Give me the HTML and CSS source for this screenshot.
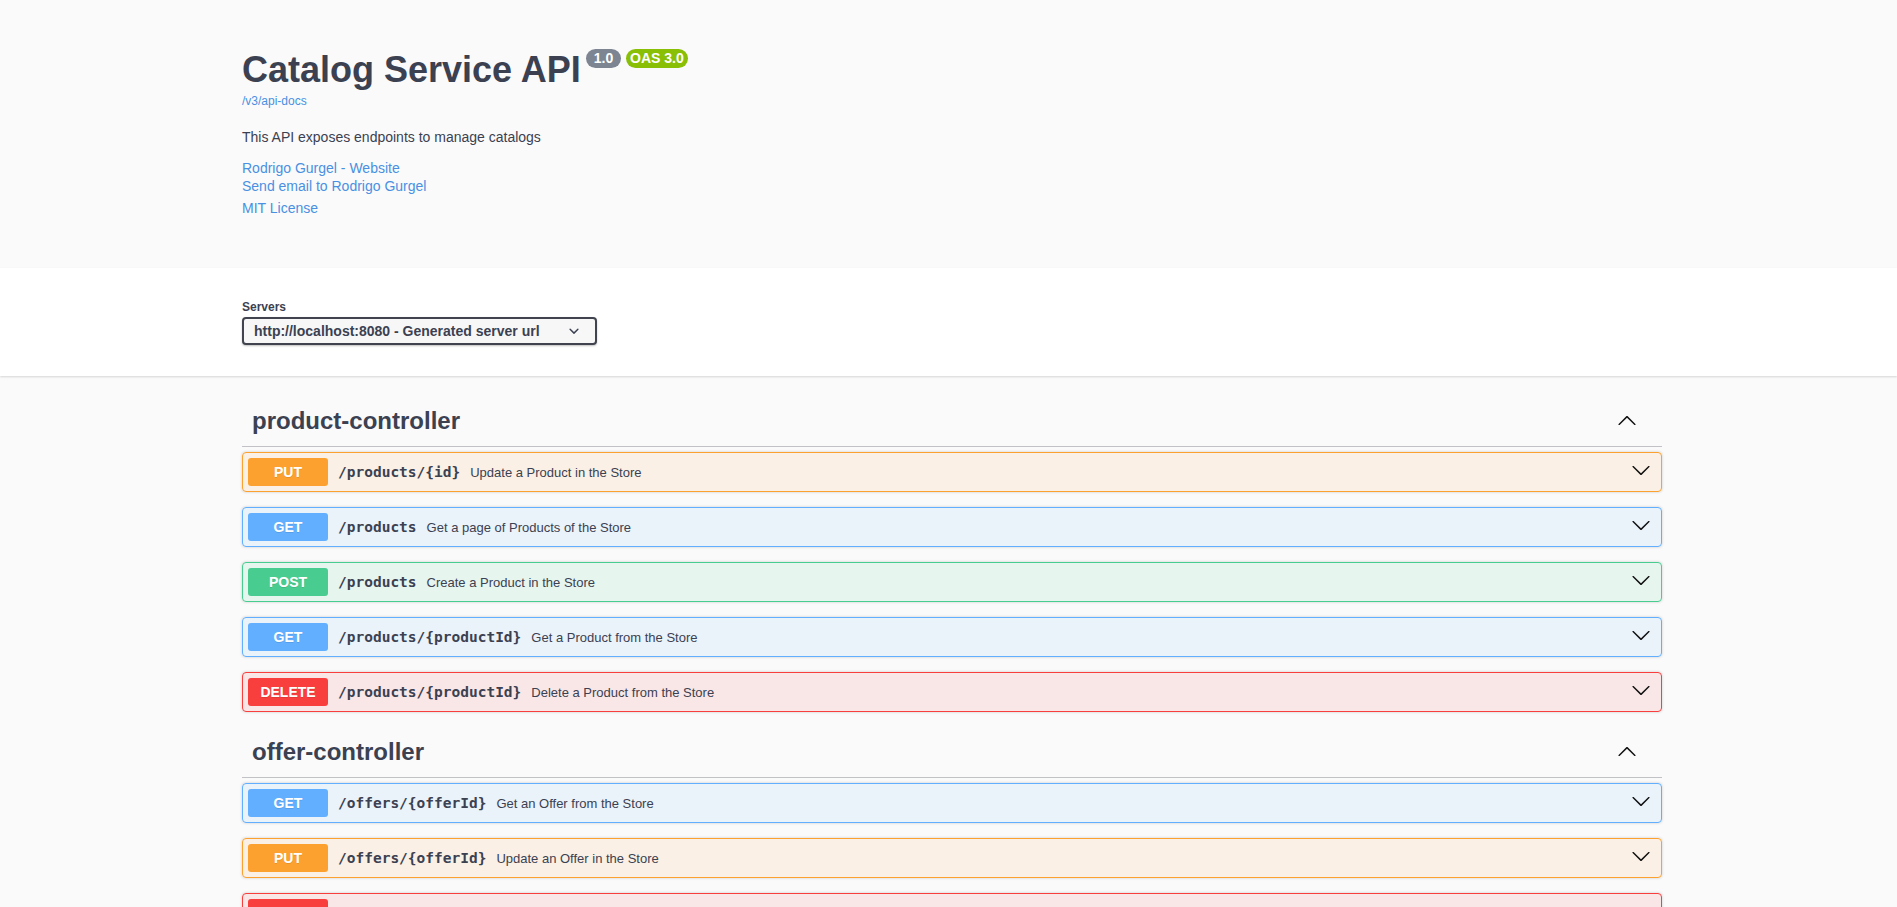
FILE: index.html
```html
<!DOCTYPE html>
<html lang="en">
<head>
<meta charset="utf-8">
<title>Catalog Service API</title>
<link rel="stylesheet" href="styles.css">
</head>
<body>
<section class="info-section">
  <div class="wrapper">
    <div class="info">
      <h2 class="title">Catalog Service API<span class="badge version"> 1.0 </span><span class="badge stamp">OAS 3.0</span></h2>
      <a class="base-url" href="#">/v3/api-docs</a>
      <p class="description">This API exposes endpoints to manage catalogs</p>
      <div class="contact">
        <a class="link" href="#">Rodrigo Gurgel - Website</a>
        <a class="link" href="#">Send email to Rodrigo Gurgel</a>
      </div>
      <div class="license"><a class="link" href="#">MIT License</a></div>
    </div>
  </div>
</section>

<section class="scheme-container">
  <div class="wrapper">
    <div class="servers">
      <span class="servers-title">Servers</span>
      <div class="select">
        <span class="select-text">http://localhost:8080 - Generated server url</span>
        <svg class="select-arrow" width="20" height="20" viewBox="0 0 20 20"><path d="M13.418 7.859a.695.695 0 01.978 0 .68.68 0 010 .969l-3.908 3.83a.697.697 0 01-.979 0l-3.908-3.83a.68.68 0 010-.969.695.695 0 01.978 0L10 11l3.418-3.141z"/></svg>
      </div>
    </div>
  </div>
</section>

<main class="wrapper ops">
  <section class="tag-section">
    <h3 class="tag">
      <span class="tag-name">product-controller</span>
      <svg class="tag-arrow" width="20" height="20" viewBox="0 0 20 20"><path d="M17.418 14.908c.272.268.709.268.979 0 .27-.268.271-.701 0-.969l-7.908-7.83c-.27-.268-.707-.268-.979 0l-7.908 7.83c-.27.268-.27.701 0 .969.271.268.709.268.979 0L10 7.767l7.418 7.141z"/></svg>
    </h3>
    <div class="opblock put">
      <div class="summary"><span class="method">PUT</span><span class="path">/products/{id}</span><span class="desc">Update a Product in the Store</span>
        <svg class="op-arrow" width="20" height="20" viewBox="0 0 20 20"><path d="M17.418 6.109c.272-.268.709-.268.979 0s.271.701 0 .969l-7.908 7.83c-.27.268-.707.268-.979 0l-7.908-7.83c-.27-.268-.27-.701 0-.969.271-.268.709-.268.979 0L10 13.25l7.418-7.141z"/></svg></div>
    </div>
    <div class="opblock get">
      <div class="summary"><span class="method">GET</span><span class="path">/products</span><span class="desc">Get a page of Products of the Store</span>
        <svg class="op-arrow" width="20" height="20" viewBox="0 0 20 20"><path d="M17.418 6.109c.272-.268.709-.268.979 0s.271.701 0 .969l-7.908 7.83c-.27.268-.707.268-.979 0l-7.908-7.830c-.27-.268-.27-.701 0-.969.271-.268.709-.268.979 0L10 13.25l7.418-7.141z"/></svg></div>
    </div>
    <div class="opblock post">
      <div class="summary"><span class="method">POST</span><span class="path">/products</span><span class="desc">Create a Product in the Store</span>
        <svg class="op-arrow" width="20" height="20" viewBox="0 0 20 20"><path d="M17.418 6.109c.272-.268.709-.268.979 0s.271.701 0 .969l-7.908 7.83c-.27.268-.707.268-.979 0l-7.908-7.83c-.27-.268-.27-.701 0-.969.271-.268.709-.268.979 0L10 13.25l7.418-7.141z"/></svg></div>
    </div>
    <div class="opblock get">
      <div class="summary"><span class="method">GET</span><span class="path">/products/{productId}</span><span class="desc">Get a Product from the Store</span>
        <svg class="op-arrow" width="20" height="20" viewBox="0 0 20 20"><path d="M17.418 6.109c.272-.268.709-.268.979 0s.271.701 0 .969l-7.908 7.83c-.27.268-.707.268-.979 0l-7.908-7.83c-.27-.268-.27-.701 0-.969.271-.268.709-.268.979 0L10 13.25l7.418-7.141z"/></svg></div>
    </div>
    <div class="opblock delete">
      <div class="summary"><span class="method">DELETE</span><span class="path">/products/{productId}</span><span class="desc">Delete a Product from the Store</span>
        <svg class="op-arrow" width="20" height="20" viewBox="0 0 20 20"><path d="M17.418 6.109c.272-.268.709-.268.979 0s.271.701 0 .969l-7.908 7.83c-.27.268-.707.268-.979 0l-7.908-7.83c-.27-.268-.27-.701 0-.969.271-.268.709-.268.979 0L10 13.25l7.418-7.141z"/></svg></div>
    </div>
  </section>

  <section class="tag-section">
    <h3 class="tag">
      <span class="tag-name">offer-controller</span>
      <svg class="tag-arrow" width="20" height="20" viewBox="0 0 20 20"><path d="M17.418 14.908c.272.268.709.268.979 0 .27-.268.271-.701 0-.969l-7.908-7.83c-.27-.268-.707-.268-.979 0l-7.908 7.83c-.27.268-.27.701 0 .969.271.268.709.268.979 0L10 7.767l7.418 7.141z"/></svg>
    </h3>
    <div class="opblock get">
      <div class="summary"><span class="method">GET</span><span class="path">/offers/{offerId}</span><span class="desc">Get an Offer from the Store</span>
        <svg class="op-arrow" width="20" height="20" viewBox="0 0 20 20"><path d="M17.418 6.109c.272-.268.709-.268.979 0s.271.701 0 .969l-7.908 7.83c-.27.268-.707.268-.979 0l-7.908-7.83c-.27-.268-.27-.701 0-.969.271-.268.709-.268.979 0L10 13.25l7.418-7.141z"/></svg></div>
    </div>
    <div class="opblock put">
      <div class="summary"><span class="method">PUT</span><span class="path">/offers/{offerId}</span><span class="desc">Update an Offer in the Store</span>
        <svg class="op-arrow" width="20" height="20" viewBox="0 0 20 20"><path d="M17.418 6.109c.272-.268.709-.268.979 0s.271.701 0 .969l-7.908 7.83c-.27.268-.707.268-.979 0l-7.908-7.83c-.27-.268-.27-.701 0-.969.271-.268.709-.268.979 0L10 13.25l7.418-7.141z"/></svg></div>
    </div>
    <div class="opblock delete">
      <div class="summary"><span class="method">DELETE</span><span class="path">/offers/{offerId}</span><span class="desc">Delete an Offer from the Store</span>
        <svg class="op-arrow" width="20" height="20" viewBox="0 0 20 20"><path d="M17.418 6.109c.272-.268.709-.268.979 0s.271.701 0 .969l-7.908 7.83c-.27.268-.707.268-.979 0l-7.908-7.83c-.27-.268-.27-.701 0-.969.271-.268.709-.268.979 0L10 13.25l7.418-7.141z"/></svg></div>
    </div>
  </section>
</main>
</body>
</html>
```

FILE: styles.css
```css
html, body {
  margin: 0;
  padding: 0;
}
body {
  background: #fafafa;
  color: #3b4151;
  font-family: "Liberation Sans", Arial, sans-serif;
}
.wrapper {
  width: 1420px;
  margin-left: 242px;
  box-sizing: border-box;
}

/* ---------- info ---------- */
.info-section {
  padding: 50px 0 51px;
}
.info {
  display: flex;
  flex-direction: column;
  align-items: flex-start;
}
.title {
  display: flex;
  align-items: flex-start;
  margin: 0;
  font-size: 36px;
  line-height: 40px;
  font-weight: 700;
  color: #3b4151;
}
.badge {
  margin: -1px 0 0 5px;
  padding: 2px 4px;
  border-radius: 57px;
  font-size: 14px;
  line-height: 15px;
  font-weight: 700;
  color: #fff;
  white-space: pre;
}
.badge.version { background: #7d8492; }
.badge.stamp { background: #89bf04; margin-left: 5px; }

.base-url {
  margin-top: 3px;
  font-size: 12px;
  line-height: 16px;
  color: #4990e2;
  text-decoration: none;
}
.description {
  margin: 19px 0 0;
  font-size: 14px;
  line-height: 18px;
}
.contact {
  margin-top: 13px;
  display: flex;
  flex-direction: column;
  align-items: flex-start;
}
.license {
  margin-top: 4px;
}
.link {
  font-size: 14px;
  line-height: 18px;
  color: #4990e2;
  text-decoration: none;
}

/* ---------- servers ---------- */
.scheme-container {
  background: #fff;
  box-shadow: 0 1px 2px 0 rgba(0, 0, 0, .15);
  padding: 32px 0 31px;
  margin-bottom: 20px;
}
.servers {
  display: flex;
  flex-direction: column;
  align-items: flex-start;
}
.servers-title {
  font-size: 12px;
  line-height: 14px;
  font-weight: 700;
}
.select {
  margin-top: 3px;
  width: 355px;
  height: 28px;
  box-sizing: border-box;
  display: flex;
  align-items: center;
  padding: 0 11px 0 10px;
  border: 2px solid #41444e;
  border-radius: 4px;
  background: #f7f7f7;
  box-shadow: 0 1px 2px 0 rgba(0, 0, 0, .25);
  font-size: 14px;
  line-height: 16px;
  font-weight: 700;
  color: #3b4151;
}
.select-text {
  flex: 1 1 auto;
}
.select-arrow {
  flex: none;
  fill: #3b4151;
}

/* ---------- operations ---------- */
.tag {
  display: flex;
  align-items: center;
  margin: 0 0 5px;
  padding: 10px 20px 10px 10px;
  border-bottom: 1px solid rgba(59, 65, 81, .3);
  font-size: 24px;
  line-height: 30px;
  font-weight: 700;
  color: #3b4151;
}
.tag-name {
  flex: 1 1 auto;
}
.tag-arrow {
  flex: none;
  margin: 0 5px 3px 0;
  fill: #111;
}

.opblock {
  margin: 0 0 15px;
  border: 1px solid #000;
  border-radius: 4px;
  box-shadow: 0 0 3px rgba(0, 0, 0, .19);
}
.summary {
  display: flex;
  align-items: center;
  padding: 5px;
}
.method {
  flex: none;
  width: 80px;
  height: 28px;
  line-height: 28px;
  border-radius: 3px;
  text-align: center;
  font-size: 14px;
  font-weight: 700;
  color: #fff;
  text-shadow: 0 1px 0 rgba(0, 0, 0, .1);
}
.path {
  flex: none;
  padding: 0 10px;
  font-family: "DejaVu Sans Mono", "Liberation Mono", monospace;
  font-size: 14.5px;
  font-weight: 700;
  color: #3b4151;
}
.desc {
  flex: 1 1 auto;
  font-size: 13px;
  color: #3b4151;
}
.op-arrow {
  flex: none;
  margin: 0 5px 5px 0;
  fill: #111;
}

.opblock.put { background: rgba(252, 161, 48, .1); border-color: #fca130; }
.opblock.put .method { background: #fca130; }
.opblock.get { background: rgba(97, 175, 254, .1); border-color: #61affe; }
.opblock.get .method { background: #61affe; }
.opblock.post { background: rgba(73, 204, 144, .1); border-color: #49cc90; }
.opblock.post .method { background: #49cc90; }
.opblock.delete { background: rgba(249, 62, 62, .1); border-color: #f93e3e; }
.opblock.delete .method { background: #f93e3e; }
```
